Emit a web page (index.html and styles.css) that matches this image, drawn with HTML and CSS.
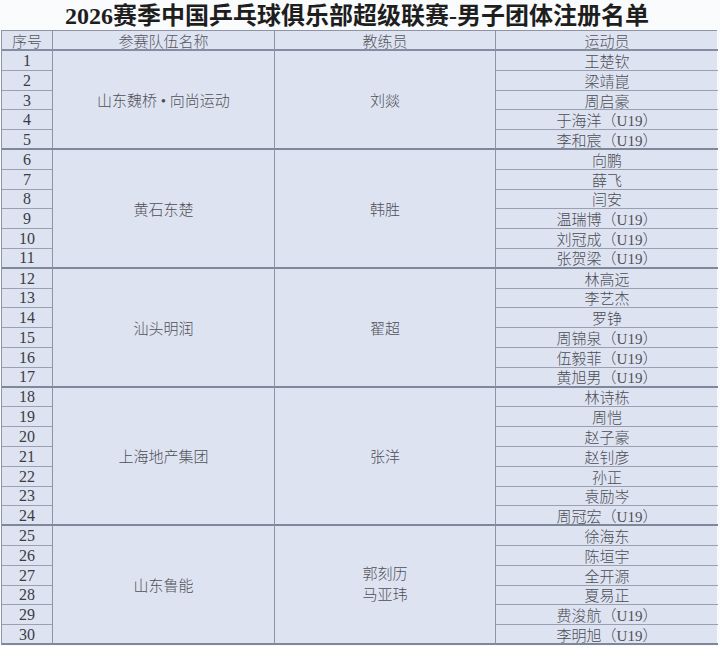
FILE: index.html
```html
<!DOCTYPE html>
<html lang="zh">
<head>
<meta charset="utf-8">
<link rel="stylesheet" href="styles.css">
</head>
<body>
<div class="page">
  <h1 class="title">2026赛季中国乒乓球俱乐部超级联赛-男子团体注册名单</h1>
  <div class="grid">
    <div class="c hd">序号</div>
    <div class="c hd">参赛队伍名称</div>
    <div class="c hd">教练员</div>
    <div class="c hd last">运动员</div>

    <div class="c num" style="grid-row:2">1</div>
    <div class="c num" style="grid-row:3">2</div>
    <div class="c num" style="grid-row:4">3</div>
    <div class="c num" style="grid-row:5">4</div>
    <div class="c num g" style="grid-row:6">5</div>
    <div class="c team g" style="grid-row:2 / 7">山东魏桥 • 向尚运动</div>
    <div class="c team g" style="grid-row:2 / 7">刘燚</div>
    <div class="c pl" style="grid-row:2">王楚钦</div>
    <div class="c pl" style="grid-row:3">梁靖崑</div>
    <div class="c pl" style="grid-row:4">周启豪</div>
    <div class="c pl" style="grid-row:5">于海洋<span class="u">（U19）</span></div>
    <div class="c pl g" style="grid-row:6">李和宸<span class="u">（U19）</span></div>

    <div class="c num" style="grid-row:7">6</div>
    <div class="c num" style="grid-row:8">7</div>
    <div class="c num" style="grid-row:9">8</div>
    <div class="c num" style="grid-row:10">9</div>
    <div class="c num" style="grid-row:11">10</div>
    <div class="c num g" style="grid-row:12">11</div>
    <div class="c team g" style="grid-row:7 / 13">黄石东楚</div>
    <div class="c team g" style="grid-row:7 / 13">韩胜</div>
    <div class="c pl" style="grid-row:7">向鹏</div>
    <div class="c pl" style="grid-row:8">薛飞</div>
    <div class="c pl" style="grid-row:9">闫安</div>
    <div class="c pl" style="grid-row:10">温瑞博<span class="u">（U19）</span></div>
    <div class="c pl" style="grid-row:11">刘冠成<span class="u">（U19）</span></div>
    <div class="c pl g" style="grid-row:12">张贺梁<span class="u">（U19）</span></div>

    <div class="c num" style="grid-row:13">12</div>
    <div class="c num" style="grid-row:14">13</div>
    <div class="c num" style="grid-row:15">14</div>
    <div class="c num" style="grid-row:16">15</div>
    <div class="c num" style="grid-row:17">16</div>
    <div class="c num g" style="grid-row:18">17</div>
    <div class="c team g" style="grid-row:13 / 19">汕头明润</div>
    <div class="c team g" style="grid-row:13 / 19">翟超</div>
    <div class="c pl" style="grid-row:13">林高远</div>
    <div class="c pl" style="grid-row:14">李艺杰</div>
    <div class="c pl" style="grid-row:15">罗铮</div>
    <div class="c pl" style="grid-row:16">周锦泉<span class="u">（U19）</span></div>
    <div class="c pl" style="grid-row:17">伍毅菲<span class="u">（U19）</span></div>
    <div class="c pl g" style="grid-row:18">黄旭男<span class="u">（U19）</span></div>

    <div class="c num" style="grid-row:19">18</div>
    <div class="c num" style="grid-row:20">19</div>
    <div class="c num" style="grid-row:21">20</div>
    <div class="c num" style="grid-row:22">21</div>
    <div class="c num" style="grid-row:23">22</div>
    <div class="c num" style="grid-row:24">23</div>
    <div class="c num g" style="grid-row:25">24</div>
    <div class="c team g" style="grid-row:19 / 26">上海地产集团</div>
    <div class="c team g" style="grid-row:19 / 26">张洋</div>
    <div class="c pl" style="grid-row:19">林诗栋</div>
    <div class="c pl" style="grid-row:20">周恺</div>
    <div class="c pl" style="grid-row:21">赵子豪</div>
    <div class="c pl" style="grid-row:22">赵钊彦</div>
    <div class="c pl" style="grid-row:23">孙正</div>
    <div class="c pl" style="grid-row:24">袁励岑</div>
    <div class="c pl g" style="grid-row:25">周冠宏<span class="u">（U19）</span></div>

    <div class="c num" style="grid-row:26">25</div>
    <div class="c num" style="grid-row:27">26</div>
    <div class="c num" style="grid-row:28">27</div>
    <div class="c num" style="grid-row:29">28</div>
    <div class="c num" style="grid-row:30">29</div>
    <div class="c num g" style="grid-row:31">30</div>
    <div class="c team g" style="grid-row:26 / 32">山东鲁能</div>
    <div class="c team g two" style="grid-row:26 / 32">郭刻历<br>马亚玮</div>
    <div class="c pl" style="grid-row:26">徐海东</div>
    <div class="c pl" style="grid-row:27">陈垣宇</div>
    <div class="c pl" style="grid-row:28">全开源</div>
    <div class="c pl" style="grid-row:29">夏易正</div>
    <div class="c pl" style="grid-row:30">费浚航<span class="u">（U19）</span></div>
    <div class="c pl g" style="grid-row:31">李明旭<span class="u">（U19）</span></div>
  </div>
</div>
</body>
</html>
```
FILE: styles.css
```css
html, body {
  margin: 0;
  padding: 0;
  background: #ffffff;
}
.page {
  width: 720px;
  height: 646px;
  overflow: hidden;
  background: #fafbfc;
}
.title {
  margin: 0;
  height: 30px;
  line-height: 33px;
  text-align: center;
  font-family: "Liberation Serif", "Noto Sans CJK SC", serif;
  font-size: 24px;
  font-weight: 600;
  color: #1e1e1e;
  padding-right: 6px;
  white-space: nowrap;
}
.grid {
  margin-left: 1px;
  width: 716px;
  display: grid;
  grid-template-columns: 51px 222px 221px 222px;
  grid-template-rows: 20px repeat(30, 19.8px);
  background: #dee3f2;
  border-top: 1.5px solid #8c94a6;
  border-left: 1.5px solid #8c94a6;
  box-sizing: border-box;
}
.c {
  display: flex;
  align-items: center;
  justify-content: center;
  border-right: 1.5px solid #8c94a6;
  border-bottom: 1.5px solid #98a0b1;
  box-sizing: border-box;
  font-family: "Liberation Serif", "Noto Sans CJK SC", serif;
  font-weight: 300;
  color: #4c4d53;
  font-size: 15px;
  white-space: nowrap;
  overflow: hidden;
}
.hd {
  color: #55565c;
  font-size: 15px;
  border-bottom: 2px solid #858da0;
}
.num {
  grid-column: 1;
  font-size: 16px;
  font-weight: 400;
  color: #3b3c42;
  padding-top: 1px;
}
.team {
  font-size: 15px;
  color: #4f5056;
}
.pl {
  grid-column: 4;
  border-right: none;
}
.g {
  border-bottom: 2px solid #7f879a;
}
.two {
  line-height: 21px;
  text-align: center;
}
.u {
  color: #4f5056;
}
.last {
  border-right: none;
}
```
